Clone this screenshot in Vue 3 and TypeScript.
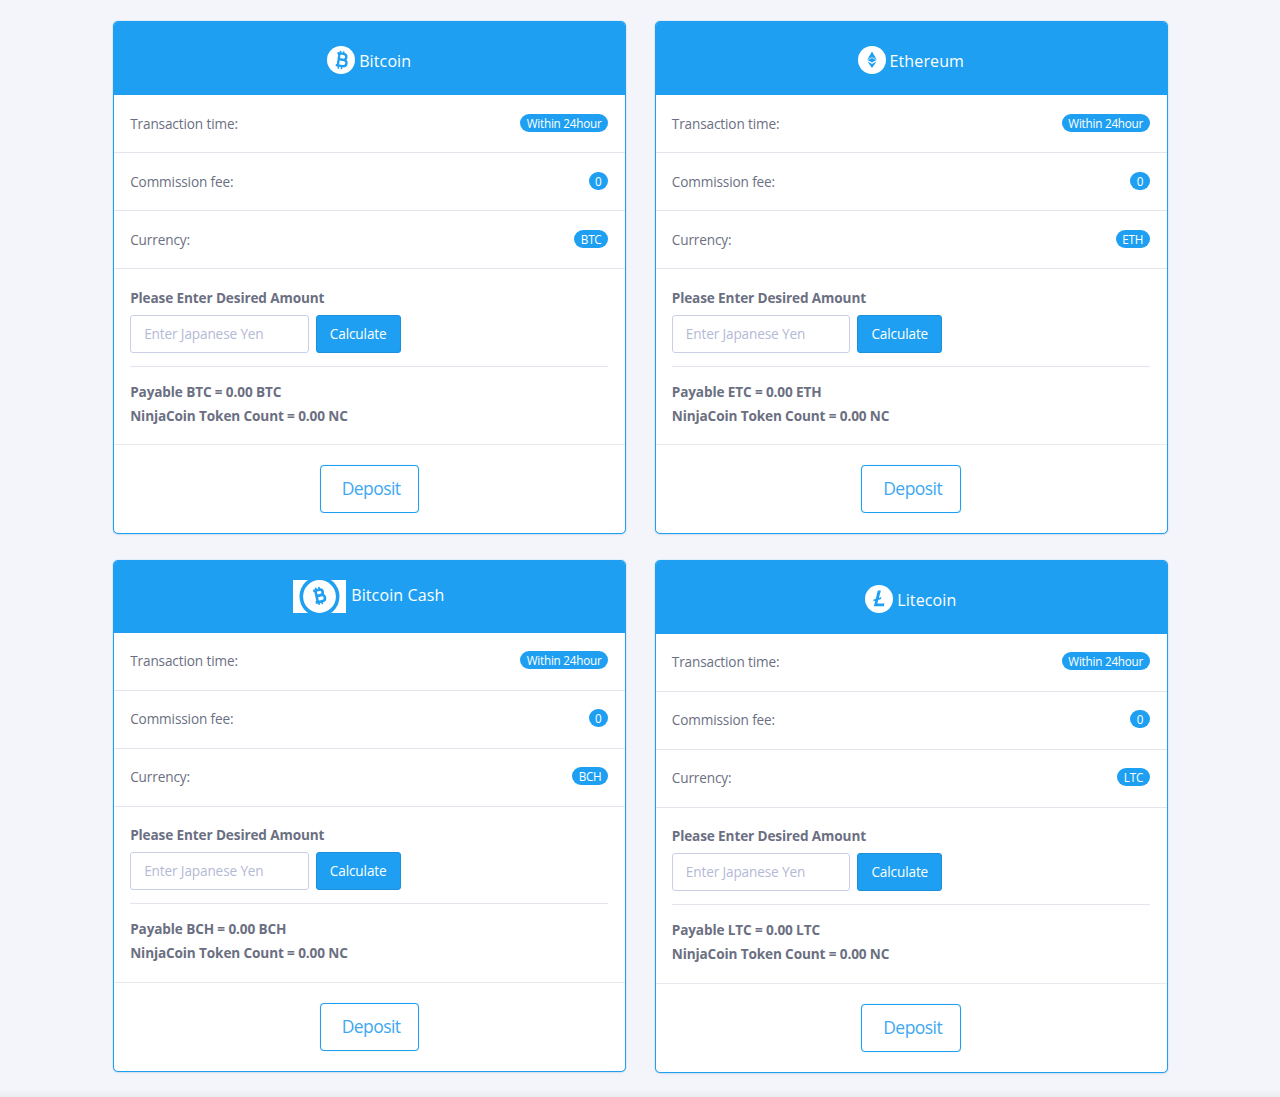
<template>
  <div class="page">
    <div class="grid">
      <section v-for="coin in coins" :key="coin.code" class="card">
        <header class="card-head" :class="{ wide: coin.icon === 'bch' }">
          <svg v-if="coin.icon === 'btc'" class="coin-icon" viewBox="0 0 28 28">
            <circle cx="14" cy="14" r="14" fill="#fff" />
            <g transform="rotate(8 14 14)" fill="none" stroke="#1e9ff2">
              <path stroke-width="2.3" d="M9.5 7.6h6.2c2 0 3.2 1.1 3.2 2.9s-1.2 3-3.2 3H11.6m0 0h4.8c2.2 0 3.5 1.2 3.5 3.2s-1.3 3.2-3.5 3.2H9.5" />
              <path stroke-width="2.3" d="M11.6 7.6v12.8" />
              <path stroke-width="1.6" d="M12.4 5v2.6M15.6 5v2.6M12.4 20.4V23M15.6 20.4V23" />
            </g>
          </svg>
          <svg v-else-if="coin.icon === 'eth'" class="coin-icon" viewBox="0 0 28 28">
            <circle cx="14" cy="14" r="14" fill="#fff" />
            <path fill="#1e9ff2" d="M14 5.5l4.8 8.3-4.8 2.8-4.8-2.8z" />
            <path fill="#1e9ff2" d="M9.3 15.2l4.7 2.8 4.7-2.8-4.7 6.8z" />
            <path fill="none" stroke="#fff" stroke-width=".7" d="M9.2 13.8l4.8-2.2 4.8 2.2" />
          </svg>
          <svg v-else-if="coin.icon === 'ltc'" class="coin-icon" viewBox="0 0 28 28">
            <circle cx="14" cy="14" r="14" fill="#fff" />
            <path fill="#1e9ff2" d="M12.8 5.5h3.1l-2 7.4 2.6-1-.6 2-2.6 1-1 3.7h7.2l-.7 2.6H8.8l1.5-5.4-2 .8.5-2 2-.8z" />
          </svg>
          <svg v-else class="coin-icon bch" viewBox="0 0 53 33">
            <rect width="53" height="33" fill="#fff" />
            <circle cx="26.5" cy="16.5" r="20" fill="#1e9ff2" />
            <circle cx="26.5" cy="16.5" r="16.4" fill="#fff" />
            <g transform="rotate(-12 26.5 16.5)" fill="none" stroke="#1e9ff2">
              <path stroke-width="2.6" d="M21.5 9.8h6c2 0 3.1 1.1 3.1 2.8s-1.1 2.9-3.1 2.9h-3.9m0 0h4.6c2.1 0 3.4 1.1 3.4 3.1s-1.3 3.1-3.4 3.1h-6.7" />
              <path stroke-width="2.6" d="M23.7 9.8v12" />
              <path stroke-width="1.7" d="M24.6 7v2.8M27.8 7v2.8M24.6 21.8v2.8M27.8 21.8v2.8" />
            </g>
          </svg>
          <span class="coin-name">{{ coin.name }}</span>
        </header>

        <ul class="facts">
          <li>Transaction time: <span class="badge">Within 24hour</span></li>
          <li>Commission fee: <span class="badge">0</span></li>
          <li>Currency: <span class="badge">{{ coin.code }}</span></li>
        </ul>

        <div class="amount">
          <label class="amount-label">Please Enter Desired Amount</label>
          <div class="amount-row">
            <input type="text" placeholder="Enter Japanese Yen" />
            <button class="calc">Calculate</button>
          </div>
          <div class="totals">
            <p>Payable {{ coin.payable }} = 0.00 {{ coin.code }}</p>
            <p>NinjaCoin Token Count = 0.00 NC</p>
          </div>
        </div>

        <div class="card-foot">
          <button class="deposit">Deposit</button>
        </div>
      </section>
    </div>
    <div class="page-foot"></div>
  </div>
</template>

<script setup lang="ts">
interface Coin {
  name: string
  code: string
  payable: string
  icon: 'btc' | 'eth' | 'bch' | 'ltc'
}

const coins: Coin[] = [
  { name: 'Bitcoin', code: 'BTC', payable: 'BTC', icon: 'btc' },
  { name: 'Ethereum', code: 'ETH', payable: 'ETC', icon: 'eth' },
  { name: 'Bitcoin Cash', code: 'BCH', payable: 'BCH', icon: 'bch' },
  { name: 'Litecoin', code: 'LTC', payable: 'LTC', icon: 'ltc' }
]
</script>

<style>
html,
body {
  margin: 0;
  background: #f4f5fa;
}
</style>

<style scoped>
.page {
  height: 1097px;
  overflow: hidden;
  display: flex;
  flex-direction: column;
  font-family: "Open Sans", "Noto Sans", sans-serif;
  font-size: 13.6px;
  letter-spacing: -0.13px;
  color: #6b6f82;
}

.grid {
  display: grid;
  grid-template-columns: 512.8px 512.8px;
  column-gap: 28.8px;
  row-gap: 25.6px;
  align-items: start;
  justify-content: start;
  padding: 21px 0 0 113.2px;
  flex: 1;
  align-content: start;
}

.card {
  background: #fff;
  border: 1px solid #1e9ff2;
  border-radius: 5px;
  box-shadow: 0 0 1px rgba(30, 159, 242, 0.7), 0 1px 2px rgba(60, 70, 110, 0.1);
  overflow: hidden;
}

.card-head {
  background: #1e9ff2;
  margin: -1px -1px 0;
  height: 74px;
  box-sizing: border-box;
  padding: 25px 0.8px 0 0;
  display: flex;
  justify-content: center;
  align-items: flex-start;
  color: #fff;
  border-radius: 5px 5px 0 0;
}

.card-head.wide {
  height: 73.1px;
  padding-top: 20px;
  padding-right: 1.6px;
}

.coin-icon {
  width: 28px;
  height: 28px;
  flex: none;
}

.coin-icon.bch {
  width: 53px;
  height: 33px;
}

.coin-name {
  margin-left: 4px;
  font-size: 16px;
  line-height: 30px;
  letter-spacing: 0.12px;
}

.wide .coin-name {
  margin-left: 5px;
}

.facts {
  list-style: none;
  margin: 0;
  padding: 0;
}

.facts li {
  height: 58px;
  box-sizing: border-box;
  border-bottom: 1px solid #e4e5ec;
  padding: 0 17px 0.6px 16px;
  display: flex;
  justify-content: space-between;
  align-items: center;
}

.badge {
  background: #1e9ff2;
  color: #fff;
  font-size: 11.7px;
  letter-spacing: -0.23px;
  line-height: 19px;
  height: 18px;
  padding: 0 6.5px;
  border-radius: 9px;
  margin-top: -1.2px;
}

.amount {
  padding: 19.6px 17px 0 16px;
}

.amount-label {
  display: block;
  font-weight: 700;
  line-height: 18px;
  margin-bottom: 8px;
}

.amount-row {
  display: flex;
  gap: 7px;
  padding-bottom: 13px;
  border-bottom: 1px solid #e4e5ec;
}

input {
  width: 178.5px;
  height: 38px;
  box-sizing: border-box;
  border: 1px solid #cacfe7;
  border-radius: 3px;
  padding: 0 13px 1px;
  font: inherit;
  letter-spacing: inherit;
  color: #6b6f82;
  outline: none;
}

input::placeholder {
  color: #b4b9d6;
  opacity: 1;
}

.calc {
  width: 85px;
  height: 38px;
  background: #1e9ff2;
  border: 1px solid #1a8fdc;
  border-radius: 3px;
  color: #fff;
  font: inherit;
  letter-spacing: inherit;
  padding: 0 0 1px;
}

.totals {
  padding: 13px 0 16.4px;
}

.totals p {
  margin: 0;
  font-weight: 700;
  line-height: 24px;
}

.card-foot {
  border-top: 1px solid #e9eaf0;
  padding: 20px 0;
  display: flex;
  justify-content: center;
}

.deposit {
  width: 99.6px;
  height: 48px;
  box-sizing: border-box;
  background: #fff;
  border: 1px solid #1e9ff2;
  border-radius: 4px;
  box-shadow: 0 0 1px rgba(30, 159, 242, 0.5);
  color: #3ea7f2;
  font: inherit;
  font-size: 17.5px;
  letter-spacing: -0.55px;
  padding: 0 0 1px 3px;
}

.page-foot {
  height: 8px;
  background: linear-gradient(#f4f5fa, #ebecf1);
  flex: none;
}
</style>
